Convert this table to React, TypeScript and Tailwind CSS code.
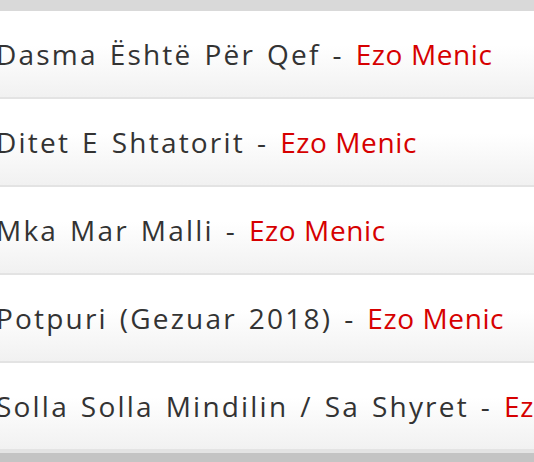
const SONGS = [
  "Dasma Është Për Qef",
  "Ditet E Shtatorit",
  "Mka Mar Malli",
  "Potpuri (Gezuar 2018)",
  "Solla Solla Mindilin / Sa Shyret",
];

export default function App() {
  return (
    <div className="w-[534px] h-[462px] overflow-hidden bg-[#d9d9d9] flex flex-col" style={{ fontFamily: '"Open Sans", "Noto Sans", sans-serif' }}>
      <div className="h-[11px] shrink-0 bg-[#d9d9d9]" />
      <ul className="flex flex-col">
        {SONGS.map(title => (
          <li
            key={title}
            className="h-[88px] flex items-center whitespace-nowrap overflow-hidden border-b-2 border-[#e3e3e3] bg-gradient-to-b from-white from-40% to-[#f1f1f1]"
          >
            <span className="-ml-[4px] text-[28px] text-[#333] tracking-[2.2px] [word-spacing:2.5px]">
              {title} - <span className="text-[#d60000] tracking-[0.6px] [word-spacing:0px]">Ezo Menic</span>
            </span>
          </li>
        ))}
      </ul>
      <div className="h-[2px] bg-[#e4e4e4]" />
      <div className="flex-1 bg-[#c4c4c4]" />
    </div>
  );
}
